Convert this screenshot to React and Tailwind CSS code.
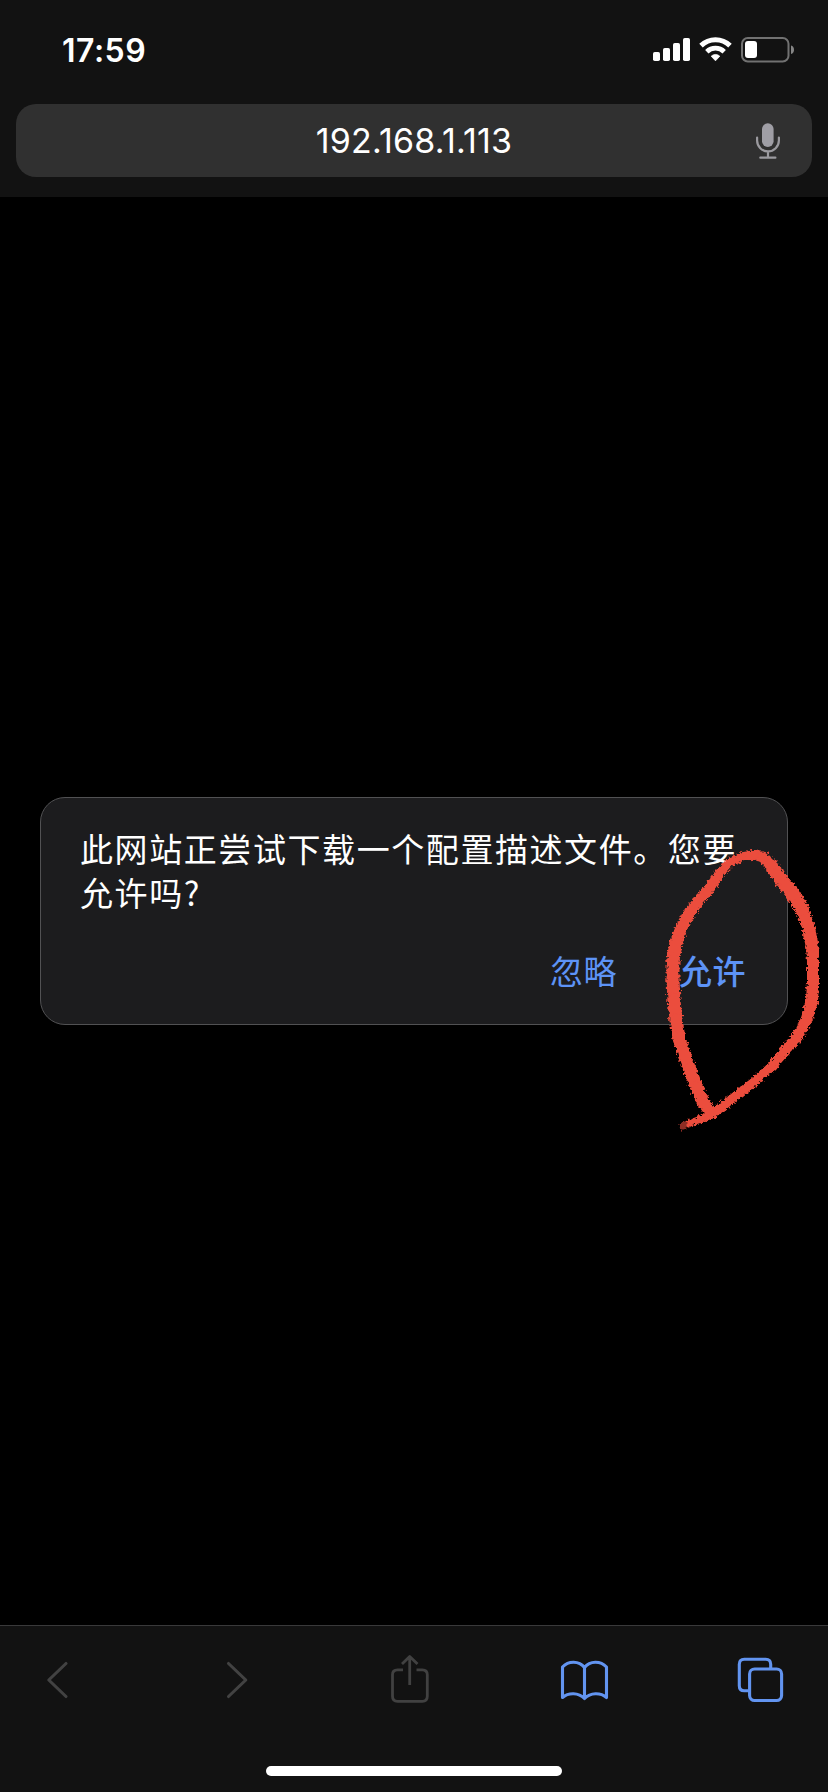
import React from "react";

// Marker samples: x, y, stroke width
const marker = [
  [683, 1126, 6], [690, 1123, 7], [701, 1119, 7], [712, 1114, 8], [723, 1106, 9],
  [737, 1095, 9], [754, 1082, 9], [771, 1067, 9], [784, 1052, 10], [797, 1037, 11],
  [806, 1021, 11], [812, 1001, 12], [813, 982, 12], [813, 962, 12], [812, 945, 12],
  [808, 926, 13], [802, 909, 13], [792, 893, 14], [780, 878, 14], [771, 865, 13],
  [763, 857, 11], [753, 855, 10], [741, 857, 9], [730, 862, 9], [720, 873, 9],
  [711, 886, 10], [701, 898, 11], [690, 912, 11], [682, 926, 12], [676, 943, 12],
  [673, 960, 13], [673, 980, 13], [674, 1000, 13], [676, 1020, 13], [679, 1038, 13],
  [683, 1052, 13], [690, 1070, 13], [697, 1088, 13], [703, 1102, 13], [711, 1113, 12],
];

function Marker() {
  return (
    <svg className="pointer-events-none absolute left-0 top-0" width="828" height="1792" viewBox="0 0 828 1792" fill="none">
      <defs>
        <filter id="crayon" filterUnits="userSpaceOnUse" x="650" y="830" width="178" height="320">
          <feTurbulence type="fractalNoise" baseFrequency="0.4" numOctaves="3" seed="4" />
          <feDisplacementMap in="SourceGraphic" scale="6" xChannelSelector="R" yChannelSelector="G" />
        </filter>
      </defs>
      <g filter="url(#crayon)" stroke="#eb4d3d" strokeLinecap="round">
        {marker.slice(1).map(([x, y, w], i) => {
          const [px, py] = marker[i];
          return <line key={i} x1={px} y1={py} x2={x} y2={y} strokeWidth={w} opacity={i === 0 ? 0.6 : 1} />;
        })}
      </g>
    </svg>
  );
}

function StatusIcons() {
  return (
    <svg width="144" height="28" viewBox="652 36 144 28" fill="none">
      <g fill="#fff">
        <rect x="653" y="52" width="7" height="9" rx="1.8" />
        <rect x="663" y="48" width="7" height="13" rx="1.8" />
        <rect x="673" y="43" width="7" height="18" rx="1.8" />
        <rect x="683" y="38" width="7" height="23" rx="1.8" />
        <path d="M711.2 56.2A6.2 6.2 0 0 1 719.8 56.2L715.5 60.8Z" stroke="#fff" strokeWidth=".8" strokeLinejoin="round" />
      </g>
      <path d="M701 45.6A20.8 20.8 0 0 1 730 45.6" stroke="#fff" strokeWidth="5" />
      <path d="M706.8 51.7A12.5 12.5 0 0 1 724.2 51.7" stroke="#fff" strokeWidth="4.8" />
      <rect x="742" y="38" width="46.5" height="23.5" rx="5.8" stroke="#717171" strokeWidth="2" />
      <rect x="745" y="41" width="12" height="17" rx="3" fill="#fff" />
      <path d="M791 45.5Q794 46.3 794 49.7Q794 53 791 54Z" fill="#858585" />
    </svg>
  );
}

function MicIcon() {
  return (
    <svg width="26" height="38" viewBox="755 121 26 38" fill="none" stroke="#9b9a9f" strokeWidth="2.2" strokeLinecap="round">
      <rect x="762" y="122.3" width="11.6" height="23.7" rx="5.8" fill="#9f9ea5" stroke="none" />
      <path d="M757.1 136.5V139.5A10.8 10.8 0 0 0 778.9 139.5V136.5M768 151V156.5M760.3 156.7H775.4" />
    </svg>
  );
}

function ToolbarIcon({ x, width, children, label, className = "" }) {
  return (
    <button aria-label={label} className={`block shrink-0 ${className}`}>
      <svg width={width} height="56" viewBox={`${x} 1652 ${width} 56`} fill="none" strokeWidth="3.1" strokeLinecap="round" strokeLinejoin="round">
        {children}
      </svg>
    </button>
  );
}

export default function App() {
  return (
    <div className="relative flex h-[1792px] w-[828px] flex-col overflow-hidden bg-black font-['Inter','Noto_Sans_CJK_SC',sans-serif] text-white">
      <header className="flex h-[197px] shrink-0 flex-col bg-[#121212] px-4">
        <div className="flex h-[104px] items-start justify-between pt-9 pr-4 pl-[46px]">
          <time className="mt-px text-[32px] leading-7 font-semibold tracking-[0.5px]">17:59</time>
          <StatusIcons />
        </div>
        <div className="grid h-[73px] grid-cols-[60px_1fr_60px] items-center rounded-[20px] bg-[#303030]">
          <span />
          <span className="text-center text-[34px] leading-none tracking-[0.2px]">192.168.1.113</span>
          <div className="pl-[3px]"><MicIcon /></div>
        </div>
      </header>

      <main className="flex flex-1 flex-col px-10 pt-[600px]">
        <section className="flex h-[228px] flex-col rounded-[25px] border border-[#515153] bg-[#1c1c1e] pt-[28px] pr-[38px] pl-[39px]">
          <p className="w-[670px] text-[33px] leading-[44px] tracking-[1.58px] whitespace-nowrap font-['Noto_Sans_CJK_SC',sans-serif]">
            此网站正尝试下载一个配置描述文件。您要<br />允许吗?
          </p>
          <div className="mt-[34px] flex justify-end gap-[62px] font-['Noto_Sans_CJK_SC',sans-serif] text-[33px] leading-[44px] tracking-[0.5px] text-[#5d93f6]">
            <button>忽略</button>
            <button className="mr-[3px] font-medium">允许</button>
          </div>
        </section>
      </main>

      <footer className="flex h-[167px] shrink-0 flex-col items-center border-t border-[#39393a] bg-[#121212] pt-[26px]">
        <nav className="flex w-full items-center pl-[44px]">
          <ToolbarIcon x={44} width={26} label="后退"><path d="M66 1663.5L48.8 1680L66 1696.5" stroke="#424242" /></ToolbarIcon>
          <ToolbarIcon x={224} width={26} label="前进" className="ml-[154px]"><path d="M228.5 1663.5L245.8 1680L228.5 1696.5" stroke="#424242" /></ToolbarIcon>
          <ToolbarIcon x={388} width={44} label="分享" className="ml-[138px]">
            <path d="M403 1669.8H397.5Q392.5 1669.8 392.5 1674.8V1696.3Q392.5 1701.3 397.5 1701.3H422.3Q427.3 1701.3 427.3 1696.3V1674.8Q427.3 1669.8 422.3 1669.8H416.5M409.7 1685V1656.5M402 1664L409.7 1656.5L417.5 1664" stroke="#414141" strokeWidth="2.8" strokeLinecap="butt" />
          </ToolbarIcon>
          <ToolbarIcon x={558} width={54} label="书签" className="ml-[126px]">
            <path d="M584.5 1667.5C579 1660.5 568.5 1660.5 562.5 1667V1697.5C568.5 1692.3 578.5 1692.3 584.5 1698.5C590.5 1692.3 600.5 1692.3 606.5 1697.5V1667C600.5 1660.5 590 1660.5 584.5 1667.5ZM584.5 1667.5V1698.5" stroke="#6294f0" />
          </ToolbarIcon>
          <ToolbarIcon x={736} width={50} label="标签页" className="ml-[124px]">
            <path d="M748 1690.8H744.3Q739.3 1690.8 739.3 1685.8V1664.3Q739.3 1659.3 744.3 1659.3H765.7Q770.7 1659.3 770.7 1664.3V1668" stroke="#6294f0" />
            <rect x="749.6" y="1669" width="32" height="31.5" rx="5" stroke="#6294f0" />
          </ToolbarIcon>
        </nav>
        <div className="mt-[58px] h-[10px] w-[296px] rounded-full bg-white" />
      </footer>
      <Marker />
    </div>
  );
}
